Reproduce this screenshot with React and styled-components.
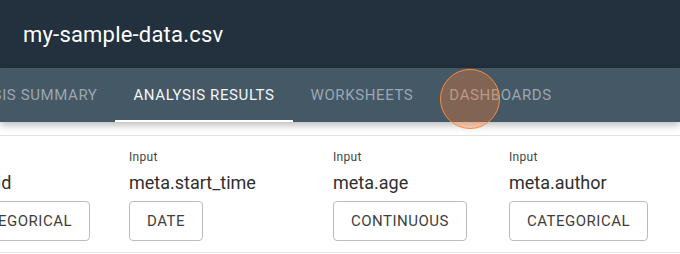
import styled, { createGlobalStyle } from "styled-components"

const GlobalStyle = createGlobalStyle`
    body {
        margin: 0;
        background: #ffffff;
        font-family: Roboto, "Liberation Sans", sans-serif;
        overflow: hidden;
    }
`

const tabs = [
    { id: 1, title: "Analysis Summary" },
    { id: 2, title: "Analysis Results", active: true },
    { id: 3, title: "Worksheets" },
    { id: 4, title: "Dashboards" },
]

const columns = [
    { id: 1, name: "meta.id", type: "Categorical", width: 178 },
    { id: 2, name: "meta.start_time", type: "Date", width: 204 },
    { id: 3, name: "meta.age", type: "Continuous", width: 176 },
    { id: 4, name: "meta.author", type: "Categorical" },
]

const App = () => {
    return (
        <Page>
            <GlobalStyle />
            <TopBar>
                <Title>my-sample-data.csv</Title>
            </TopBar>
            <TabBar>
                <TabList>
                    {tabs.map((tab) => (
                        <Tab key={tab.id} $active={tab.active}>
                            {tab.title}
                        </Tab>
                    ))}
                </TabList>
                <TouchRipple />
            </TabBar>
            <Card>
                <ColumnRow>
                    {columns.map((col) => (
                        <Column key={col.id} $width={col.width}>
                            <Label>Input</Label>
                            <Name>{col.name}</Name>
                            <TypeButton>{col.type}</TypeButton>
                        </Column>
                    ))}
                </ColumnRow>
            </Card>
        </Page>
    )
}

const Page = styled.div`
    width: 680px;
    height: 254px;
    overflow: hidden;
    background: #ffffff;
`
const TopBar = styled.header`
    height: 68px;
    background-color: #22313d;
    display: flex;
    align-items: center;
    padding: 0 23px;
`
const Title = styled.h1`
    margin: 0;
    color: #ffffff;
    font-size: 22px;
    font-weight: 400;
    letter-spacing: 0.2px;
`
const TabBar = styled.nav`
    position: relative;
    z-index: 2;
    height: 54px;
    background-color: #455866;
    box-shadow: 0 3px 8px rgba(0, 0, 0, 0.28);
`
const TabList = styled.div`
    display: flex;
    height: 100%;
    margin-left: -74px;
`
const Tab = styled.div`
    position: relative;
    display: flex;
    align-items: center;
    padding: 0 18px;
    font-size: 15px;
    font-weight: 400;
    letter-spacing: 0.6px;
    text-transform: uppercase;
    white-space: nowrap;
    color: ${(p) => (p.$active ? "#f4f6f7" : "#9aa7b0")};
    &::after {
        content: "";
        position: absolute;
        left: 0;
        right: 0;
        bottom: 0;
        height: 2px;
        background: ${(p) => (p.$active ? "#ffffff" : "transparent")};
    }
`
const TouchRipple = styled.span`
    position: absolute;
    left: 440px;
    top: 1px;
    width: 58px;
    height: 58px;
    border-radius: 50%;
    border: 1.5px solid #ff8a3d;
    background: rgba(255, 125, 50, 0.33);
`
const Card = styled.section`
    margin-top: 13px;
    border-top: 1px solid #e2e2e2;
    border-bottom: 1px solid #e2e2e2;
    padding: 14px 0 11px;
`
const ColumnRow = styled.div`
    display: flex;
    margin-left: -49px;
`
const Column = styled.div`
    flex: 0 0 ${(p) => (p.$width ? `${p.$width}px` : "auto")};
    display: flex;
    flex-direction: column;
    align-items: flex-start;
`
const Label = styled.span`
    font-size: 12px;
    line-height: 15px;
    letter-spacing: 0.3px;
    color: #454545;
`
const Name = styled.span`
    margin-top: 6px;
    font-size: 18px;
    line-height: 24px;
    color: #2f2f2f;
`
const TypeButton = styled.button`
    margin-top: 6px;
    height: 40px;
    padding: 0 17px;
    border: 1px solid #bcbcbc;
    border-radius: 4px;
    background: #ffffff;
    font-family: Roboto, "Liberation Sans", sans-serif;
    font-size: 15px;
    font-weight: 400;
    letter-spacing: 0.5px;
    text-transform: uppercase;
    color: #3e3e3e;
`

export default App
